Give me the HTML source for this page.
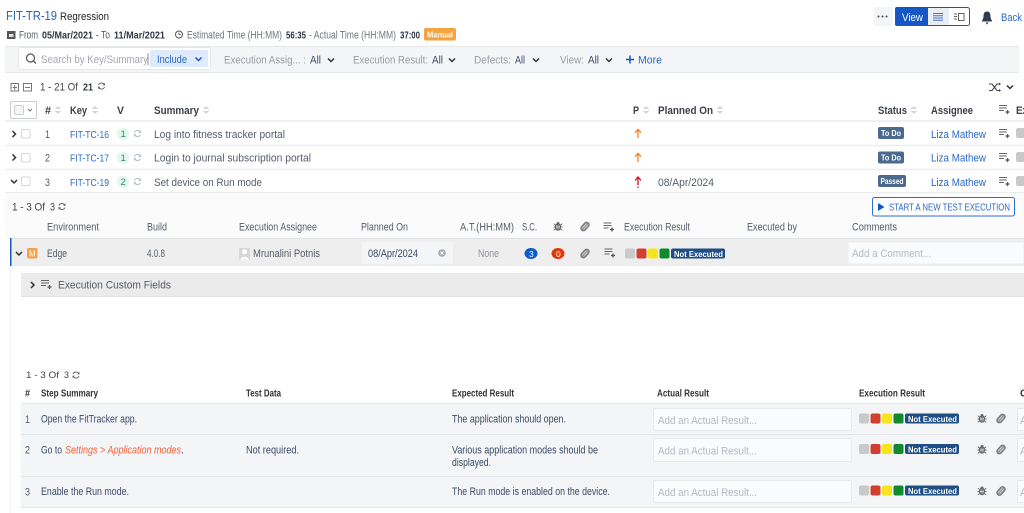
<!DOCTYPE html>
<html><head><meta charset="utf-8"><style>
html,body{margin:0;padding:0;background:#fff;width:1024px;height:513px;overflow:hidden}
svg{display:block;color:#333;filter:blur(.3px)}
text{font-family:"Liberation Sans",sans-serif;font-size:11px;fill:#44526a}
.g{fill:#8f949c}.d{fill:#333}.b{font-weight:bold;fill:#2f3542}.l{fill:#2a68c8}.h{font-weight:bold;fill:#3a3f48;font-size:11px}
.p{fill:#b4b9c2}.w{fill:#fff;font-weight:bold;font-size:8.500px}.s{fill:#555d6b;font-size:10.800px}.hh{fill:#333;font-weight:bold;font-size:10px}.t{fill:#3a4a66;font-size:10.600px}
</style></head><body>
<svg width="1024" height="513" viewBox="0 0 1024 513" xmlns="http://www.w3.org/2000/svg">
<defs>
<g id="chev"><path d="M-3-1.500L0 1.500L3-1.500" fill="none" stroke="currentColor" stroke-width="1.500"/></g>
<g id="chr"><path d="M-1.500-3L1.500 0L-1.500 3" fill="none" stroke="#333" stroke-width="1.500"/></g>
<g id="sort"><path d="M-3.500-1L0-4L3.500-1ZM-3.500 1L0 4L3.500 1Z" fill="#d3d6db"/></g>
<g id="list"><path d="M0-3.500H8M0-1H8M0 1.500H5" stroke="#666" stroke-width="1.100" fill="none"/><path d="M8.500 1V5M6.500 3H10.500" stroke="#555" stroke-width="1.300" fill="none"/></g>
<g id="rf"><path d="M-3-1A3.200 3.200 0 0 1 2.700-1.500M3 1A3.200 3.200 0 0 1-2.700 1.500" fill="none" stroke="currentColor" stroke-width="1"/><path d="M3.500-3.200V-.6H1.200ZM-3.500 3.200V.6H-1.200Z" fill="currentColor"/></g>
<g id="bug"><ellipse cx="0" cy="0.500" rx="2.600" ry="3.200" fill="#8b8f96" stroke="#666" stroke-width="1"/><circle cy="-3" r="1.500" fill="#666"/><path d="M-4.200-2.800L-2.500-1.500M4.200-2.800L2.500-1.500M-4.500 .5H-2.500M4.500 .5H2.500M-4.200 3.800L-2.500 2.500M4.200 3.800L2.500 2.500" stroke="#666" stroke-width=".9"/><path d="M-2 .5H2" stroke="#eee" stroke-width=".7"/></g>
<g id="clip"><g transform="rotate(42)"><rect x="-2.600" y="-5" width="5.200" height="10" rx="2.600" fill="#8f9298" stroke="#777" stroke-width="1"/><path d="M-.9-3V3M.9-3V3" stroke="#e6e6e6" stroke-width=".6"/></g></g>
<g id="res"><rect x="0" y="0" width="10" height="10" rx="2" fill="#c9c9c9"/><rect x="11.500" y="0" width="10" height="10" rx="2" fill="#d1402f"/><rect x="23" y="0" width="10" height="10" rx="2" fill="#f7e51c"/><rect x="34.500" y="0" width="10" height="10" rx="2" fill="#11892f"/><rect x="46" y="0" width="54" height="10" rx="2" fill="#1f4e85"/></g>
<g id="up"><path d="M0 4.500V-4M-3-.8L0-4L3-.8" fill="none" stroke="#f58220" stroke-width="1.300"/></g>
</defs>

<!-- header -->
<text x="6" y="20" class="l" style="font-size:13px;fill:#2765b5" textLength="51" lengthAdjust="spacingAndGlyphs">FIT-TR-19</text>
<text x="60" y="20" class="d" style="font-size:11px;fill:#222" textLength="49" lengthAdjust="spacingAndGlyphs">Regression</text>
<rect x="7.500" y="31.500" width="7.500" height="7" fill="#555" stroke="#555"/><rect x="9" y="34" width="4.500" height="3" fill="#ddd"/>
<text x="19" y="38.500" class="s" textLength="19" lengthAdjust="spacingAndGlyphs">From</text>
<text x="42" y="38.500" class="b" style="font-size:10px" textLength="51" lengthAdjust="spacingAndGlyphs">05/Mar/2021</text>
<text x="96" y="38.500" class="s" textLength="14" lengthAdjust="spacingAndGlyphs">- To</text>
<text x="114" y="38.500" class="b" style="font-size:10px" textLength="51" lengthAdjust="spacingAndGlyphs">11/Mar/2021</text>
<circle cx="179" cy="34.500" r="3.500" fill="none" stroke="#555" stroke-width="1"/><path d="M179 32.500V34.500H181" fill="none" stroke="#555" stroke-width=".8"/>
<text x="187" y="38.500" class="s" style="fill:#6f7580" textLength="95" lengthAdjust="spacingAndGlyphs">Estimated Time (HH:MM)</text>
<text x="286" y="38.500" class="b" style="font-size:10px" textLength="20" lengthAdjust="spacingAndGlyphs">56:35</text>
<text x="309" y="38.500" class="s" style="fill:#6f7580" textLength="87" lengthAdjust="spacingAndGlyphs">- Actual Time (HH:MM)</text>
<text x="400" y="38.500" class="b" style="font-size:10px" textLength="20" lengthAdjust="spacingAndGlyphs">37:00</text>
<rect x="424" y="28" width="32" height="12.500" rx="2" fill="#f6a23e"/>
<text x="427" y="37.500" class="w" textLength="26" lengthAdjust="spacingAndGlyphs">Manual</text>

<!-- top right -->
<rect x="874" y="7" width="19" height="19" rx="2" fill="#f4f5f7"/>
<circle cx="878.500" cy="16.500" r="1" fill="#444"/><circle cx="882.500" cy="16.500" r="1" fill="#444"/><circle cx="886.500" cy="16.500" r="1" fill="#444"/>
<rect x="895.500" y="7.500" width="74" height="18" rx="2" fill="#fff" stroke="#1555c4"/>
<path d="M897 7H928V26H897Q895 26 895 24V9Q895 7 897 7Z" fill="#1555c4"/>
<text x="902" y="21" style="fill:#fff;font-size:11px" textLength="21" lengthAdjust="spacingAndGlyphs">View</text>
<rect x="928" y="8" width="21" height="17" fill="#e9edf5"/>
<path d="M933 13.500H943M933 15.700H943M933 18H943M933 20.300H943" stroke="#4a73c4" stroke-width="1"/>
<path d="M954 14H957M954 16.500H957M954 19H957" stroke="#666" stroke-width="1"/><rect x="958.500" y="13.500" width="5.500" height="7" fill="none" stroke="#666"/>
<path d="M987 11.500C984 11.500 983.500 14 983.500 16.500C983.500 19 982 20 982 21.500H992C992 20 990.500 19 990.500 16.500C990.500 14 990 11.500 987 11.500ZM985.500 22.500H988.500L987 24.500Z" fill="#2e3b52"/>
<text x="1001" y="21" class="l" textLength="21" lengthAdjust="spacingAndGlyphs">Back</text>

<!-- filter bar -->
<rect x="5" y="46" width="1014" height="27" fill="#f4f5f7"/><path d="M5 46.500H1019M5 72.500H1019" stroke="#e6e8eb"/>
<rect x="18.500" y="47.500" width="192" height="22" rx="2" fill="#fff" stroke="#e4e6ea"/>
<circle cx="30.500" cy="58" r="4" fill="none" stroke="#555" stroke-width="1.200"/><path d="M33.500 61L36 63.500" stroke="#555" stroke-width="1.300"/>
<text x="41" y="63" class="p" style="fill:#a5a9b0" textLength="107" lengthAdjust="spacingAndGlyphs">Search by Key/Summary</text>
<path d="M148 53V65" stroke="#777" stroke-width=".8"/>
<rect x="150" y="50" width="58" height="17" rx="1.500" fill="#deebff"/>
<text x="157" y="63" class="l" textLength="30" lengthAdjust="spacingAndGlyphs">Include</text>
<use href="#chev" x="198.500" y="59" style="color:#1555c4"/>
<text x="224" y="63.500" class="g" style="fill:#9a9da3" textLength="82" lengthAdjust="spacingAndGlyphs">Execution Assig... :</text><text x="310" y="63.500" class="t" textLength="11" lengthAdjust="spacingAndGlyphs">All</text><use href="#chev" x="331" y="60"/>
<text x="353" y="63.500" class="g" style="fill:#9a9da3" textLength="75" lengthAdjust="spacingAndGlyphs">Execution Result:</text><text x="432" y="63.500" class="t" textLength="11" lengthAdjust="spacingAndGlyphs">All</text><use href="#chev" x="452" y="60"/>
<text x="474" y="63.500" class="g" style="fill:#9a9da3" textLength="37" lengthAdjust="spacingAndGlyphs">Defects:</text><text x="515" y="63.500" class="t" textLength="10" lengthAdjust="spacingAndGlyphs">All</text><use href="#chev" x="536" y="60"/>
<text x="560" y="63.500" class="g" style="fill:#9a9da3" textLength="24" lengthAdjust="spacingAndGlyphs">View:</text><text x="588" y="63.500" class="t" textLength="11" lengthAdjust="spacingAndGlyphs">All</text><use href="#chev" x="609" y="60"/>
<path d="M630 55.500V63.500M626 59.500H634" stroke="#1555c4" stroke-width="1.500"/>
<text x="638" y="63.500" class="l" textLength="24" lengthAdjust="spacingAndGlyphs">More</text>

<!-- count -->
<rect x="11" y="83.500" width="7.500" height="7.500" fill="none" stroke="#777"/><path d="M14.700 85V90M12.500 87.500H17" stroke="#777"/>
<rect x="23.500" y="83.500" width="8" height="7.500" fill="none" stroke="#777"/><path d="M25 87.500H30" stroke="#777"/>
<text x="40" y="90.500" class="s" style="fill:#444" textLength="38" lengthAdjust="spacingAndGlyphs">1 - 21 Of</text>
<text x="83" y="90.500" class="b" style="font-size:10.500px" textLength="10" lengthAdjust="spacingAndGlyphs">21</text>
<use href="#rf" x="101.500" y="86" style="color:#666"/>
<path d="M989 84H992L997 90.500H1000M989 90.500H992L997 84H1000" fill="none" stroke="#445" stroke-width="1.100"/><path d="M999 82.500V85.500L1001 84ZM999 89V92L1001 90.500Z" fill="#445"/>
<use href="#chev" x="1010" y="87"/>

<!-- table header -->
<rect x="10.500" y="101.500" width="26" height="17" rx="1.500" fill="#fff" stroke="#c9ccd1"/>
<rect x="14.500" y="105.500" width="9" height="9" rx="1.500" fill="#f4f5f7" stroke="#ccc"/>
<path d="M28 109L30 111L32 109" stroke="#777" fill="none"/>
<text x="45" y="114" class="h" textLength="6" lengthAdjust="spacingAndGlyphs">#</text><use href="#sort" x="58" y="110"/>
<text x="70" y="114" class="h" textLength="17" lengthAdjust="spacingAndGlyphs">Key</text><use href="#sort" x="95" y="110"/>
<text x="117" y="114" class="h" textLength="7" lengthAdjust="spacingAndGlyphs">V</text>
<text x="154" y="114" class="h" textLength="45" lengthAdjust="spacingAndGlyphs">Summary</text><use href="#sort" x="206" y="110"/>
<text x="633" y="114" class="h" textLength="6" lengthAdjust="spacingAndGlyphs">P</text><use href="#sort" x="646" y="110"/>
<text x="658" y="114" class="h" textLength="55" lengthAdjust="spacingAndGlyphs">Planned On</text><use href="#sort" x="720" y="110"/>
<text x="878" y="114" class="h" textLength="29" lengthAdjust="spacingAndGlyphs">Status</text><use href="#sort" x="914" y="110"/>
<text x="931" y="114" class="h" textLength="42" lengthAdjust="spacingAndGlyphs">Assignee</text>
<use href="#list" x="999" y="109"/>
<text x="1016" y="114" class="h" textLength="12" lengthAdjust="spacingAndGlyphs">Ex</text>

<!-- rows -->
<path d="M5 121H1024" stroke="#eff0f2" stroke-width="2"/><path d="M5 145.500H1024M5 169.500H1024" stroke="#eceef1" stroke-width="1.500"/><path d="M5 192.500H1024" stroke="#e9ebee"/>
<use href="#chr" x="14" y="134"/><use href="#chr" x="14" y="157.500"/><use href="#chev" x="14" y="181.500"/>
<rect x="21.500" y="129.500" width="8.500" height="8.500" rx="1.500" fill="#fff" stroke="#d5d7db"/><rect x="21.500" y="153.500" width="8.500" height="8.500" rx="1.500" fill="#fff" stroke="#d5d7db"/><rect x="21.500" y="177" width="8.500" height="8.500" rx="1.500" fill="#fff" stroke="#d5d7db"/>
<text x="45" y="138" class="s" textLength="5" lengthAdjust="spacingAndGlyphs">1</text><text x="45" y="161.500" class="s" textLength="5" lengthAdjust="spacingAndGlyphs">2</text><text x="45" y="186" class="s" textLength="5" lengthAdjust="spacingAndGlyphs">3</text>
<text x="70" y="138" class="l" style="font-size:10.500px" textLength="39" lengthAdjust="spacingAndGlyphs">FIT-TC-16</text><text x="70" y="161.500" class="l" style="font-size:10.500px" textLength="39" lengthAdjust="spacingAndGlyphs">FIT-TC-17</text><text x="70" y="186" class="l" style="font-size:10.500px" textLength="39" lengthAdjust="spacingAndGlyphs">FIT-TC-19</text>
<rect x="117" y="128" width="12" height="11.500" rx="5" fill="#e3f7ee"/><rect x="117" y="152" width="12" height="11.500" rx="5" fill="#e3f7ee"/><rect x="117" y="176" width="12" height="11.500" rx="5" fill="#e3f7ee"/>
<text x="120.500" y="137" style="font-size:9.500px;fill:#2c8a5e">1</text><text x="120.500" y="161" style="font-size:9.500px;fill:#2c8a5e">1</text><text x="120.500" y="185" style="font-size:9.500px;fill:#2c8a5e">2</text>
<use href="#rf" x="137.500" y="133.500" style="color:#b5b8bd"/><use href="#rf" x="137.500" y="157.500" style="color:#b5b8bd"/><use href="#rf" x="137.500" y="181.500" style="color:#b5b8bd"/>
<text x="154" y="138" class="s" textLength="131" lengthAdjust="spacingAndGlyphs">Log into fitness tracker portal</text>
<text x="154" y="161.500" class="s" textLength="157" lengthAdjust="spacingAndGlyphs">Login to journal subscription portal</text>
<text x="154" y="186" class="s" textLength="108" lengthAdjust="spacingAndGlyphs">Set device on Run mode</text>
<use href="#up" x="638" y="133.500"/><use href="#up" x="638" y="157.500"/>
<path d="M638 185V177M635 180.500L638 177L641 180.500" fill="none" stroke="#d4121a" stroke-width="1.300"/><path d="M638 186.500V188" stroke="#d4121a" stroke-width="1.300"/>
<text x="658" y="186" class="s" textLength="56" lengthAdjust="spacingAndGlyphs">08/Apr/2024</text>
<rect x="878" y="127" width="26" height="12" rx="2" fill="#4a6a8f"/><text x="881" y="136" class="w" textLength="20" lengthAdjust="spacingAndGlyphs">To Do</text>
<rect x="878" y="151.500" width="26" height="12" rx="2" fill="#4a6a8f"/><text x="881" y="160.500" class="w" textLength="20" lengthAdjust="spacingAndGlyphs">To Do</text>
<rect x="878" y="175" width="28" height="12" rx="2" fill="#4a6a8f"/><text x="880.500" y="184" class="w" textLength="23" lengthAdjust="spacingAndGlyphs">Passed</text>
<text x="931" y="138" class="l" textLength="55" lengthAdjust="spacingAndGlyphs">Liza Mathew</text><text x="931" y="161.500" class="l" textLength="55" lengthAdjust="spacingAndGlyphs">Liza Mathew</text><text x="931" y="186" class="l" textLength="55" lengthAdjust="spacingAndGlyphs">Liza Mathew</text>
<use href="#list" x="999" y="133"/><use href="#list" x="999" y="157"/><use href="#list" x="999" y="181"/>
<rect x="1016" y="128" width="10" height="10" rx="2" fill="#c9c9c9"/><rect x="1016" y="152" width="10" height="10" rx="2" fill="#c9c9c9"/><rect x="1016" y="176" width="10" height="10" rx="2" fill="#c9c9c9"/>

<!-- execution section -->
<rect x="5" y="193" width="1019" height="45" fill="#fbfbfb"/>
<text x="12" y="210.500" class="s" style="fill:#444" textLength="33" lengthAdjust="spacingAndGlyphs">1 - 3 Of</text><text x="50" y="210.500" class="s" style="fill:#444" textLength="5" lengthAdjust="spacingAndGlyphs">3</text><use href="#rf" x="62" y="206.500" style="color:#666"/>
<rect x="872.500" y="197.500" width="142" height="18.500" rx="2" fill="#fff" stroke="#2f6fd0"/>
<path d="M878 203V211L884.500 207Z" fill="#1555c4"/>
<text x="889" y="210.500" class="l" style="font-size:10px" textLength="121" lengthAdjust="spacingAndGlyphs">START A NEW TEST EXECUTION</text>
<text x="47" y="230.500" class="s" textLength="52" lengthAdjust="spacingAndGlyphs">Environment</text>
<text x="147" y="230.500" class="s" textLength="20" lengthAdjust="spacingAndGlyphs">Build</text>
<text x="239" y="230.500" class="s" textLength="78" lengthAdjust="spacingAndGlyphs">Execution Assignee</text>
<text x="361" y="230.500" class="s" textLength="47" lengthAdjust="spacingAndGlyphs">Planned On</text>
<text x="460" y="230.500" class="s" textLength="54" lengthAdjust="spacingAndGlyphs">A.T.(HH:MM)</text>
<text x="522" y="230.500" class="s" textLength="15" lengthAdjust="spacingAndGlyphs">S.C.</text>
<text x="624" y="230.500" class="s" textLength="66" lengthAdjust="spacingAndGlyphs">Execution Result</text>
<text x="747" y="230.500" class="s" textLength="50" lengthAdjust="spacingAndGlyphs">Executed by</text>
<text x="852" y="230.500" class="s" textLength="45" lengthAdjust="spacingAndGlyphs">Comments</text>
<use href="#bug" x="558" y="226.500"/><use href="#clip" x="585" y="226.500"/><use href="#list" x="603.500" y="226.500"/>

<rect x="10" y="238" width="1014" height="28" fill="#eeeeee"/><path d="M10 238.500H1024" stroke="#e2e3e5"/>
<rect x="10" y="238" width="1.500" height="28" fill="#1555c4"/>
<path d="M10.500 266V513" stroke="#f3f3f3"/>
<use href="#chev" x="19" y="253.500"/>
<rect x="27" y="248" width="10.500" height="10.500" rx="1.500" fill="#f2a24a"/><text x="29" y="256.500" style="fill:#fff;font-size:8px">M</text>
<text x="47" y="257" class="s" textLength="20" lengthAdjust="spacingAndGlyphs">Edge</text>
<text x="147" y="257" class="s" textLength="18" lengthAdjust="spacingAndGlyphs">4.0.8</text>
<rect x="239" y="248" width="11" height="11.500" fill="#d8d8d8"/><circle cx="244.500" cy="251.800" r="2.500" fill="#fff"/><path d="M240.500 259.500C240.500 256 248.500 256 248.500 259.500Z" fill="#fff"/>
<text x="253" y="257" class="s" textLength="67" lengthAdjust="spacingAndGlyphs">Mrunalini Potnis</text>
<rect x="362" y="242" width="91" height="22" rx="1.500" fill="#f4f5f7"/>
<text x="368" y="257" class="t" textLength="50" lengthAdjust="spacingAndGlyphs">08/Apr/2024</text>
<circle cx="442" cy="253" r="3.800" fill="#a5a9b0"/><path d="M440.500 251.500L443.500 254.500M443.500 251.500L440.500 254.500" stroke="#fff" stroke-width=".9"/>
<text x="478" y="257" class="g" textLength="21" lengthAdjust="spacingAndGlyphs">None</text>
<ellipse cx="531" cy="253.500" rx="6.500" ry="5.500" fill="#0a5ccc"/><text x="529" y="256.800" style="fill:#fff;font-size:8.500px">3</text>
<ellipse cx="558" cy="253.500" rx="6.500" ry="5.500" fill="#e03a0c"/><text x="556" y="256.800" style="fill:#fff;font-size:8.500px">0</text>
<use href="#clip" x="585" y="253.500"/><use href="#list" x="604.500" y="252.500"/>
<use href="#res" x="625" y="248.500"/>
<text x="674" y="256.800" class="w" textLength="49" lengthAdjust="spacingAndGlyphs">Not Executed</text>
<rect x="848" y="242" width="176" height="22" fill="#fafbfc" stroke="#eeeeee"/>
<text x="852" y="257" class="p" textLength="79" lengthAdjust="spacingAndGlyphs">Add a Comment...</text>

<rect x="21" y="273" width="1003" height="24" fill="#ebebeb"/><path d="M21 296.500H1024" stroke="#e0e1e3"/>
<use href="#chr" x="32.500" y="285"/><use href="#list" x="41" y="284"/>
<text x="58" y="288.500" class="s" style="font-size:11px" textLength="113" lengthAdjust="spacingAndGlyphs">Execution Custom Fields</text>

<!-- steps -->
<text x="26" y="378" class="s" style="font-size:9.500px;fill:#444" textLength="33" lengthAdjust="spacingAndGlyphs">1 - 3 Of</text><text x="64" y="378" class="s" style="font-size:9.500px;fill:#444" textLength="5" lengthAdjust="spacingAndGlyphs">3</text><use href="#rf" x="76" y="375" style="color:#666"/>
<text x="25" y="396.500" class="hh" textLength="5" lengthAdjust="spacingAndGlyphs">#</text>
<text x="41" y="396.500" class="hh" textLength="57" lengthAdjust="spacingAndGlyphs">Step Summary</text>
<text x="246" y="396.500" class="hh" textLength="35" lengthAdjust="spacingAndGlyphs">Test Data</text>
<text x="452" y="396.500" class="hh" textLength="62" lengthAdjust="spacingAndGlyphs">Expected Result</text>
<text x="657" y="396.500" class="hh" textLength="52" lengthAdjust="spacingAndGlyphs">Actual Result</text>
<text x="859" y="396.500" class="hh" textLength="66" lengthAdjust="spacingAndGlyphs">Execution Result</text>
<text x="1020" y="396.500" class="hh">C</text>
<rect x="21" y="403" width="1003" height="105" fill="#f4f5f7"/>
<path d="M21 403.500H1024M21 434.500H1024M21 476.500H1024M21 507.500H1024" stroke="#e4e6ea"/>
<text x="25" y="423" class="s" textLength="5" lengthAdjust="spacingAndGlyphs">1</text><text x="25" y="453.500" class="s" textLength="5" lengthAdjust="spacingAndGlyphs">2</text><text x="25" y="495.500" class="s" textLength="5" lengthAdjust="spacingAndGlyphs">3</text>
<text x="41" y="422.500" class="t" textLength="96" lengthAdjust="spacingAndGlyphs">Open the FitTracker app.</text>
<text x="41" y="453.500" class="t" textLength="21" lengthAdjust="spacingAndGlyphs">Go to</text>
<text x="65" y="453.500" style="fill:#f0623a;font-size:10.600px;font-style:italic" textLength="116" lengthAdjust="spacingAndGlyphs">Settings &gt; Application modes</text>
<text x="181" y="453.500" class="t">.</text>
<text x="41" y="495" class="t" textLength="88" lengthAdjust="spacingAndGlyphs">Enable the Run mode.</text>
<text x="246" y="453.500" class="t" textLength="53" lengthAdjust="spacingAndGlyphs">Not required.</text>
<text x="452" y="422.500" class="t" textLength="114" lengthAdjust="spacingAndGlyphs">The application should open.</text>
<text x="452" y="453.500" class="t" textLength="146" lengthAdjust="spacingAndGlyphs">Various application modes should be</text>
<text x="452" y="466" class="t" textLength="39" lengthAdjust="spacingAndGlyphs">displayed.</text>
<text x="452" y="495" class="t" textLength="158" lengthAdjust="spacingAndGlyphs">The Run mode is enabled on the device.</text>
<rect x="653.500" y="408.500" width="198" height="22" rx="1.500" fill="#fafbfc" stroke="#e8e9ec"/>
<rect x="653.500" y="438.500" width="198" height="23" rx="1.500" fill="#fafbfc" stroke="#e8e9ec"/>
<rect x="653.500" y="480.500" width="198" height="22" rx="1.500" fill="#fafbfc" stroke="#e8e9ec"/>
<text x="658" y="424" class="p" textLength="99" lengthAdjust="spacingAndGlyphs">Add an Actual Result...</text>
<text x="658" y="454.500" class="p" textLength="99" lengthAdjust="spacingAndGlyphs">Add an Actual Result...</text>
<text x="658" y="496" class="p" textLength="99" lengthAdjust="spacingAndGlyphs">Add an Actual Result...</text>
<use href="#res" x="859" y="413.500"/><text x="908" y="422" class="w" textLength="49" lengthAdjust="spacingAndGlyphs">Not Executed</text>
<use href="#res" x="859" y="444"/><text x="908" y="452.500" class="w" textLength="49" lengthAdjust="spacingAndGlyphs">Not Executed</text>
<use href="#res" x="859" y="485.500"/><text x="908" y="494" class="w" textLength="49" lengthAdjust="spacingAndGlyphs">Not Executed</text>
<use href="#bug" x="982" y="418.500"/><use href="#clip" x="1001" y="418.500"/>
<use href="#bug" x="982" y="449.500"/><use href="#clip" x="1001" y="449.500"/>
<use href="#bug" x="982" y="491"/><use href="#clip" x="1001" y="491"/>
<rect x="1017.500" y="408.500" width="10" height="22" fill="#fafbfc" stroke="#e8e9ec"/>
<rect x="1017.500" y="438.500" width="10" height="23" fill="#fafbfc" stroke="#e8e9ec"/>
<rect x="1017.500" y="480.500" width="10" height="22" fill="#fafbfc" stroke="#e8e9ec"/>
<text x="1020" y="424" class="p">A</text><text x="1020" y="454.500" class="p">A</text><text x="1020" y="496" class="p">A</text>
</svg>
</body></html>
